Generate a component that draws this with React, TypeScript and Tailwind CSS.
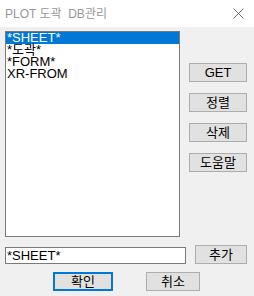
import { useState } from 'react'

const items = ['*SHEET*', '*도곽*', '*FORM*', 'XR-FROM']
const sideButtons = ['GET', '정렬', '삭제', '도움말']

const font = { fontFamily: '"Liberation Sans", "Noto Sans CJK KR", sans-serif' }

function Btn({ label, className = '' }: { label: string; className?: string }) {
  return (
    <button
      className={`h-[19px] bg-[#e1e1e1] border border-[#adadad] text-[13px] leading-none text-black flex items-center justify-center ${className}`}
    >
      {label}
    </button>
  )
}

export default function App() {
  const [selected, setSelected] = useState(0)
  const [value, setValue] = useState('*SHEET*')

  return (
    <div className="w-[254px] h-[296px] bg-[#f0f0f0] flex flex-col overflow-hidden" style={font}>
      {/* title bar */}
      <div className="h-[27px] bg-white flex items-center pl-[5px] pr-[10px]">
        <span className="text-[12px] text-[#999999] whitespace-pre">PLOT 도곽  DB관리</span>
        <svg className="ml-auto" width="11" height="11" viewBox="0 0 11 11">
          <path d="M0.5 0.5 L10.5 10.5 M10.5 0.5 L0.5 10.5" stroke="#6b6b6b" strokeWidth="1" />
        </svg>
      </div>

      <div className="flex pt-[4px] pl-[5px]">
        {/* list */}
        <div className="w-[175px] h-[206px] bg-white border border-[#7a7a7a]">
          {items.map((it, i) => (
            <div
              key={it}
              onClick={() => setSelected(i)}
              className={`h-[12px] pl-[1px] text-[13px] leading-[12px] whitespace-pre ${
                i === selected ? 'bg-[#0078d7] text-white' : 'text-black'
              }`}
            >
              {it}
            </div>
          ))}
        </div>

        {/* side buttons */}
        <div className="ml-[9px] mt-[32px] flex flex-col gap-[11px]">
          {sideButtons.map((b) => (
            <Btn key={b} label={b} className="w-[58px]" />
          ))}
        </div>
      </div>

      {/* input row */}
      <div className="flex items-end pl-[5px] mt-[8px]">
        <input
          value={value}
          onChange={(e) => setValue(e.target.value)}
          className="w-[181px] h-[17px] bg-white border border-[#7a7a7a] px-[1px] text-[13px] leading-none text-black outline-none"
        />
        <Btn label="추가" className="ml-[9px] w-[52px]" />
      </div>

      {/* ok / cancel */}
      <div className="flex mt-[8px] pl-[53px]">
        <button className="w-[60px] h-[19px] bg-[#e1e1e1] border-2 border-[#0078d7] text-[13px] leading-none text-black flex items-center justify-center">
          확인
        </button>
        <Btn label="취소" className="ml-[33px] w-[54px]" />
      </div>
    </div>
  )
}
